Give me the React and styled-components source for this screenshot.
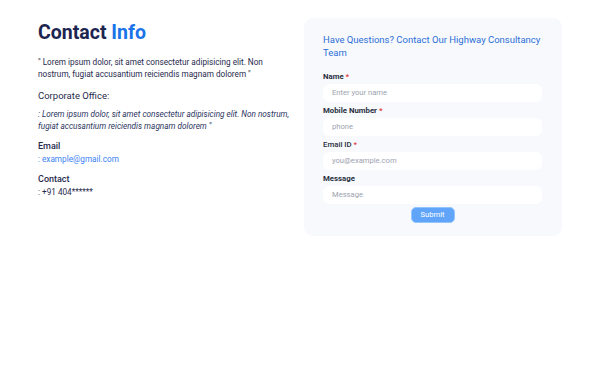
import React, { useState } from 'react';
import styled, { createGlobalStyle } from 'styled-components';

const GlobalStyle = createGlobalStyle`
    body {
        margin: 0;
        background: #ffffff;
        font-family: Roboto, "Noto Sans", sans-serif;
    }
`;

export default function App() {
    const [form, setForm] = useState({ name: '', phone: '', email: '', message: '' });

    const handleChange = (field) => (event) => {
        setForm({ ...form, [field]: event.target.value });
    };

    const handleSubmit = (event) => {
        event.preventDefault();
    };

    return (
        <>
            <GlobalStyle />
            <Page>
                <InfoColumn>
                    <Title>
                        Contact <Highlight>Info</Highlight>
                    </Title>
                    <Intro>
                        " Lorem ipsum dolor, sit amet consectetur adipisicing elit. Non nostrum, fugiat accusantium reiciendis magnam dolorem "
                    </Intro>
                    <OfficeHeading>Corporate Office:</OfficeHeading>
                    <OfficeText>
                        : Lorem ipsum dolor, sit amet consectetur adipisicing elit. Non nostrum, fugiat accusantium reiciendis magnam dolorem "
                    </OfficeText>
                    <DetailBlock>
                        <DetailLabel>Email</DetailLabel>
                        <DetailValue $link>: example@gmail.com</DetailValue>
                    </DetailBlock>
                    <DetailBlock>
                        <DetailLabel>Contact</DetailLabel>
                        <DetailValue>: +91 404******</DetailValue>
                    </DetailBlock>
                </InfoColumn>

                <FormCard onSubmit={handleSubmit}>
                    <FormTitle>Have Questions? Contact Our Highway Consultancy Team</FormTitle>
                    <Field>
                        <Label>Name <Required>*</Required></Label>
                        <Input type="text" placeholder="Enter your name" value={form.name} onChange={handleChange('name')} />
                    </Field>
                    <Field>
                        <Label>Mobile Number <Required>*</Required></Label>
                        <Input type="tel" placeholder="phone" value={form.phone} onChange={handleChange('phone')} />
                    </Field>
                    <Field>
                        <Label $light>Email ID <Required>*</Required></Label>
                        <Input type="email" placeholder="you@example.com" value={form.email} onChange={handleChange('email')} />
                    </Field>
                    <Field>
                        <Label>Message</Label>
                        <Input type="text" placeholder="Message" value={form.message} onChange={handleChange('message')} />
                    </Field>
                    <SubmitRow>
                        <SubmitButton type="submit">Submit</SubmitButton>
                    </SubmitRow>
                </FormCard>
            </Page>
        </>
    );
}

const Page = styled.main`
    display: grid;
    grid-template-columns: 256px 258px;
    column-gap: 10px;
    align-items: start;
    padding: 18px 38px;
    color: #1f2a4d;
`;

const InfoColumn = styled.section`
    display: flex;
    flex-direction: column;
    padding-top: 3px;
`;

const Title = styled.h1`
    margin: 0 0 11px;
    font-size: 19.5px;
    line-height: 24px;
    font-weight: 700;
    color: #1c2550;
`;

const Highlight = styled.span`
    color: #1a73e8;
`;

const Intro = styled.p`
    margin: 0 0 9px;
    font-size: 8.2px;
    line-height: 12px;
    color: #1f2a4d;
`;

const OfficeHeading = styled.h3`
    margin: 0 0 6px;
    font-size: 9.5px;
    line-height: 13px;
    font-weight: 400;
    color: #1f2a4d;
`;

const OfficeText = styled.p`
    margin: 0 0 8px;
    font-size: 8.2px;
    line-height: 12px;
    font-style: italic;
    color: #2b3560;
`;

const DetailBlock = styled.div`
    display: flex;
    flex-direction: column;
    gap: 1px;
    margin-bottom: 8px;
`;

const DetailLabel = styled.h4`
    margin: 0;
    font-size: 9px;
    line-height: 12px;
    font-weight: 500;
    color: #1f2a4d;
`;

const DetailValue = styled.span`
    font-size: 8.2px;
    line-height: 12px;
    color: ${(props) => (props.$link ? '#3b82f6' : '#1f2a4d')};
`;

const FormCard = styled.form`
    display: flex;
    flex-direction: column;
    background: #f7f9fd;
    border-radius: 9px;
    padding: 14.5px 20px 13px 19px;
`;

const FormTitle = styled.h2`
    margin: 0 0 11px;
    font-size: 9.5px;
    line-height: 13.5px;
    font-weight: 400;
    color: #2d6fd8;
`;

const Field = styled.div`
    display: flex;
    flex-direction: column;
    gap: 2px;
    margin-bottom: 3px;
`;

const Label = styled.label`
    font-size: 7.8px;
    line-height: 11px;
    font-weight: ${(props) => (props.$light ? 500 : 700)};
    color: #2a3040;
`;

const Required = styled.span`
    color: #e53e3e;
`;

const Input = styled.input`
    height: 18px;
    box-sizing: border-box;
    border: none;
    border-radius: 6px;
    background: #ffffff;
    padding: 0 9px;
    font-family: inherit;
    font-size: 7.6px;
    color: #333;
    outline: none;

    &::placeholder {
        color: #9ca3af;
    }
`;

const SubmitRow = styled.div`
    display: flex;
    justify-content: center;
`;

const SubmitButton = styled.button`
    width: 44px;
    height: 16px;
    padding: 0;
    border: 1px solid #93c5fd;
    border-radius: 5px;
    background: #60a5fa;
    color: #ffffff;
    font-family: inherit;
    font-size: 7.6px;
    cursor: pointer;
`;
